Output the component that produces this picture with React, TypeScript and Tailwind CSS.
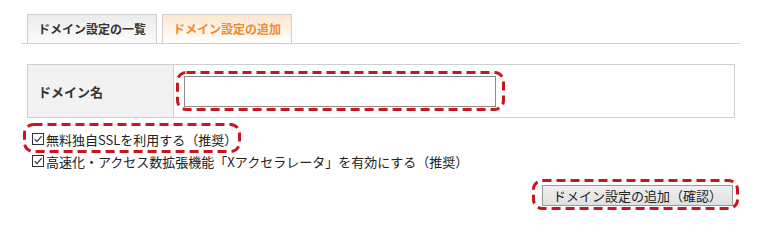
import React from "react";

const Check = () => (
  <svg width="12" height="12" viewBox="0 0 12 12" className="shrink-0">
    <rect x="0.5" y="0.5" width="11" height="11" fill="#fff" stroke="#333" strokeWidth="1" />
    <path d="M2.6 6.2 L5 8.6 L9.6 3.2" fill="none" stroke="#333" strokeWidth="1.2" />
  </svg>
);

const Dash = ({ className }: { className: string }) => (
  <svg className={`absolute pointer-events-none overflow-visible ${className}`} width="100%" height="100%">
    <rect
      x="1.5"
      y="1.5"
      width="calc(100% - 3px)"
      height="calc(100% - 3px)"
      rx="9"
      ry="9"
      fill="none"
      stroke="#c8151f"
      strokeWidth="3"
      strokeDasharray="9 5"
    />
  </svg>
);

export default function App() {
  return (
    <div
      className="w-[767px] h-[227px] bg-white text-[#222] overflow-hidden"
      style={{ fontFamily: '"Noto Sans CJK JP", "Noto Sans", sans-serif' }}
    >
      <div className="w-[745px] pl-[22px]">
        {/* Tabs */}
        <div className="pt-[14px]">
          <div className="w-[718px] border-b border-[#cfcfcf] flex pl-[5px] gap-[5px]">
            <div className="w-[130px] h-[29px] border border-b-0 border-[#cfcfcf] bg-gradient-to-b from-[#ececec] to-[#fbfbfb] flex items-center justify-center text-[12px] font-bold text-[#333] leading-none">
              ドメイン設定の一覧
            </div>
            <div className="w-[130px] h-[29px] border border-b-0 border-[#cfcfcf] bg-gradient-to-b from-[#fde6cc] to-[#ffffff] flex items-center justify-center text-[12px] font-bold text-[#ee8a2c] leading-none">
              ドメイン設定の追加
            </div>
          </div>
        </div>

        {/* Table */}
        <div className="mt-[20px] ml-[5px] w-[708px] h-[54px] border border-[#cfcfcf] flex">
          <div className="w-[146px] bg-[#f2f2f2] border-r border-[#cfcfcf] flex items-center pl-[10px] text-[13px] font-bold text-[#333] leading-none">
            ドメイン名
          </div>
          <div className="flex-1 pl-[10px] pt-[11px]">
            <div className="relative w-[312px] h-[31px]">
              <input
                type="text"
                className="w-full h-full border border-[#8a8a8a] bg-white outline-none"
              />
              <Dash className="-left-[8px] -top-[5px] w-[329px] h-[40px]" />
            </div>
          </div>
        </div>

        {/* Checkboxes */}
        <div className="mt-[10px] pl-[10px] flex flex-col text-[13px] leading-none text-[#222]">
          <div className="relative self-start h-[22px] flex items-center gap-[2px]">
            <Check />
            <span>無料独自SSLを利用する（推奨）</span>
            <Dash className="-left-[9px] -top-[5px] w-[218px] h-[30px]" />
          </div>
          <div className="h-[22px] flex items-center gap-[2px]">
            <Check />
            <span>高速化・アクセス数拡張機能「Xアクセラレータ」を有効にする（推奨）</span>
          </div>
        </div>

        {/* Button */}
        <div className="mt-[13px] w-[711px] flex justify-end">
          <div className="relative">
            <button className="w-[191px] h-[21px] border border-[#9a9a9a] bg-gradient-to-b from-[#f0f0f0] to-[#e0e0e0] text-[13px] leading-none text-[#222] flex items-center justify-center">
              ドメイン設定の追加（確認）
            </button>
            <Dash className="-left-[10px] -top-[6px] w-[207px] h-[31px]" />
          </div>
        </div>
      </div>
    </div>
  );
}
